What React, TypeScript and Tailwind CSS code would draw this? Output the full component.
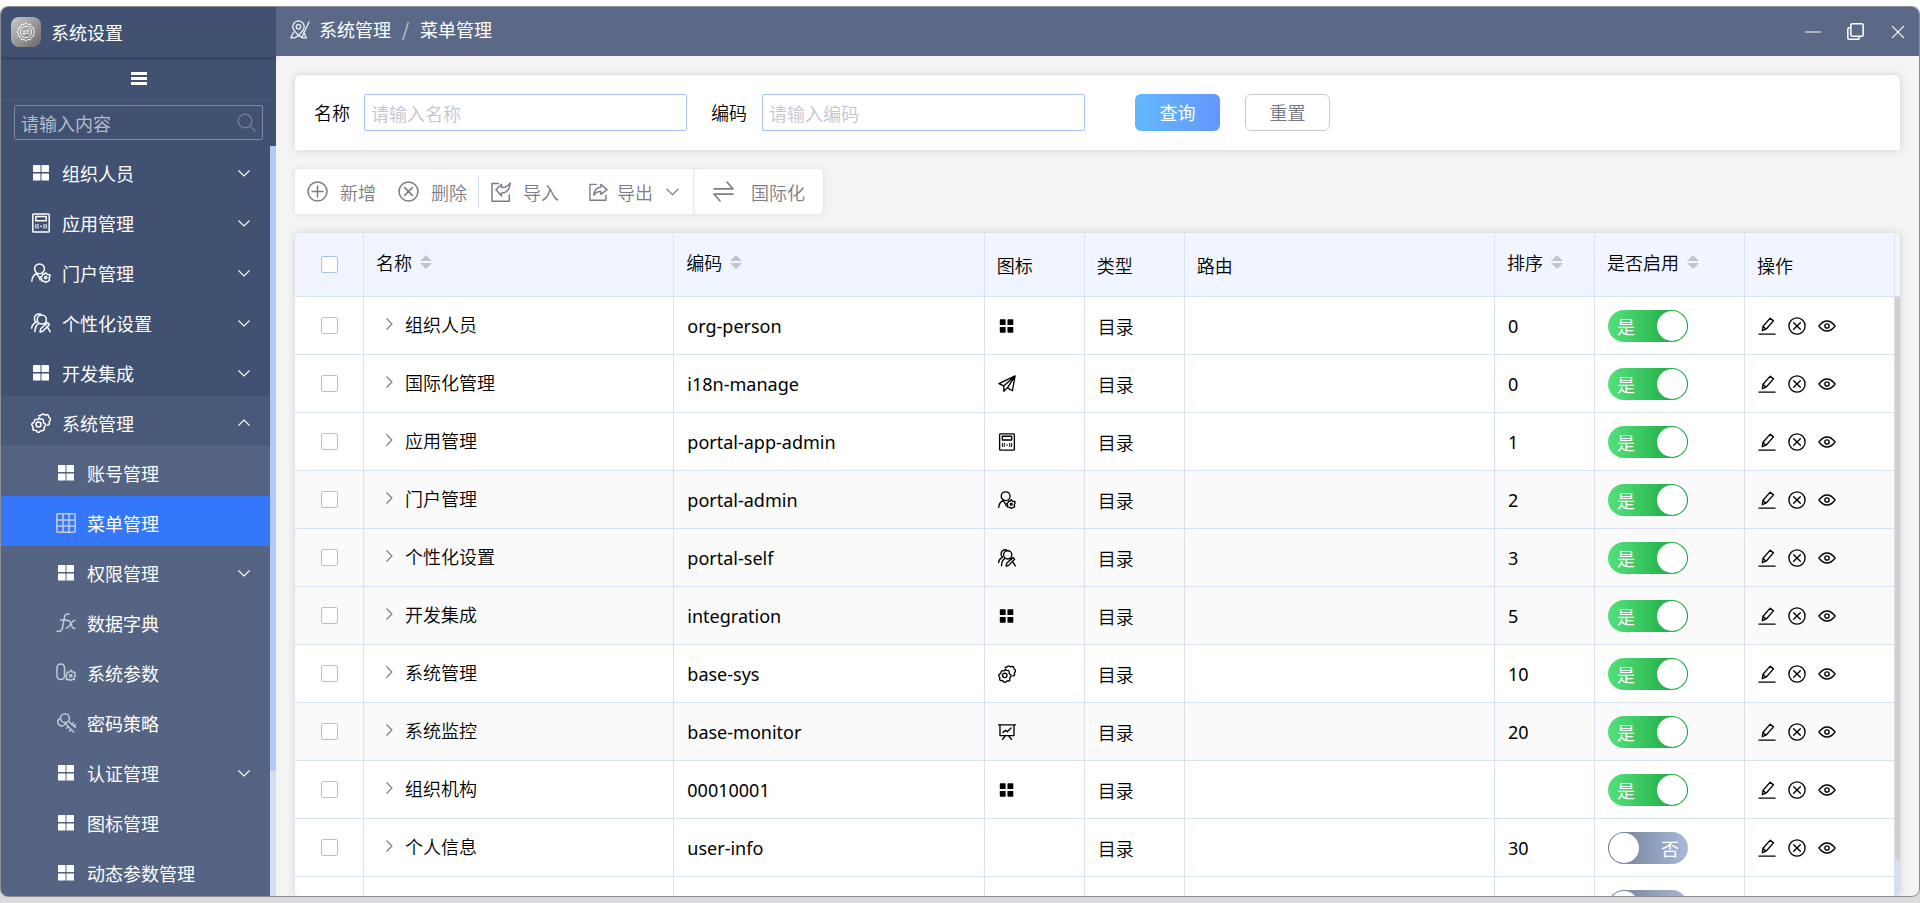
import { useState } from 'react';
import type { ReactNode } from 'react';

type IconProps = { className?: string; thick?: number };

function Svg({ className = 'size-5', thick = 1.5, children }: IconProps & { children: ReactNode }) {
  return (
    <svg
      viewBox="0 0 20 20"
      className={`${className} shrink-0`}
      fill="none"
      stroke="currentColor"
      strokeWidth={thick}
      strokeLinecap="round"
      strokeLinejoin="round"
      aria-hidden="true"
    >
      {children}
    </svg>
  );
}

const GridIcon = ({ className }: IconProps) => (
  <Svg className={className}>
    <g fill="currentColor" stroke="none">
      <rect x="2" y="2" width="7.500" height="7" rx="0.6" />
      <rect x="10.500" y="2" width="7.500" height="7" rx="0.6" />
      <rect x="2" y="10.500" width="7.500" height="7" rx="0.6" />
      <rect x="10.500" y="10.500" width="7.500" height="7" rx="0.6" />
    </g>
  </Svg>
);

const GridSmallIcon = ({ className }: IconProps) => (
  <Svg className={className}>
    <g fill="currentColor" stroke="none">
      <rect x="2" y="2.5" width="6.500" height="6.500" rx="0.8" />
      <rect x="10.500" y="2.5" width="6.500" height="6.500" rx="0.8" />
      <rect x="2" y="11" width="6.500" height="6.500" rx="0.8" />
      <rect x="10.500" y="11" width="6.500" height="6.500" rx="0.8" />
    </g>
  </Svg>
);

const AppIcon = (p: IconProps) => (
  <Svg {...p}>
    <rect x="1.8" y="1" width="16.4" height="18" rx="0.8" />
    <rect x="4.8" y="3.6" width="10.4" height="4.2" />
    <path
      d="M5 11.500q-1 1.700 0 3.600M7 11.500v3.600M13 11.500v3.600M15 11.500q1 1.700 0 3.600"
      strokeWidth="1.100"
    />
    <circle cx="10" cy="13.300" r="0.900" fill="currentColor" stroke="none" />
  </Svg>
);

const UserGearIcon = (p: IconProps) => (
  <Svg {...p}>
    <circle cx="8.500" cy="5.800" r="4.900" />
    <path d="M.8 18.200c.2-3.800 1.700-6.200 4.700-7.600M5.500 10.600l2 2.600c1 1.300 1.500 2.300 1.700 3.600" />
    <path d="M14.800 9.800l1.500 1.700 2.500.2.100 2-.9 1.500.5 2.200-1.800 1-2 .9-1.700-1.100-2.200-.3-.1-2.100-1-1.700 1.500-1.400.7-1.700 1.700.1z" />
    <circle cx="14.700" cy="14.600" r="1.100" />
  </Svg>
);

const UserEditIcon = (p: IconProps) => (
  <Svg {...p}>
    <circle cx="10.800" cy="6.500" r="4.600" />
    <path d="M9.500 1C6 .4 3.300 2.500 3.400 5.600c0 1.700.8 2.800 1.800 3.500-2.600 1.300-4.100 3-4.600 6" />
    <path d="M7.500 10.600c-2.300 1.600-3.500 4-3.600 8M13.500 10.500l1.500 1.300M9 19l.7-3.200 6.800-6.300 2 2-6.700 6.700zM16.700 14.500l2.500 4.300" />
  </Svg>
);

const GearsIcon = (p: IconProps) => (
  <Svg {...p}>
    <path d="M8.100 4.600q1 2 3.200 1.500 1.600.6 1 2.700.3 1.500 2 2.200.8 1.600-.9 2.800-.8 1.200-.1 2.900-1 1.500-2.900.9-1.400.2-2.300 1.800-1.700.3-2.400-1.500-1.100-1-2.900-.5-1.500-1.200-.7-2.900-.1-1.500-1.500-2.500.1-1.800 1.900-2.300 1.200-.9 1.100-2.700 1.400-1.200 2.900-.3 1.100 0 1.600-2.100z" />
    <circle cx="7.500" cy="11.500" r="2.500" />
    <path d="M7.800 2.500q1.600.8 2.700-.9 1.500-1.300 2.900.1 1.300.6 2.600-.2 1.800.4 1.700 2.200.3 1.200 1.700 1.900.5 1.700-.9 2.600-.7 1.100.1 2.600-.7 1.500-2.200 1.300" />
  </Svg>
);

const PlaneIcon = (p: IconProps) => (
  <Svg {...p}>
    <path d="M19 1L1 9.500l5.500 2.500L19 1zM19 1l-3 16.500-5.500-3.200L19 1zM6.500 12v6l3.600-3.700" />
  </Svg>
);

const BoardIcon = (p: IconProps) => (
  <Svg {...p}>
    <path d="M.6 2h18.800M2.200 2v12h15.600V2M8 14.500l-3 3.700M12 14.500l3 3.700M5.500 10.500l2.800-2.300 1.900 1.600 4.300-4.200" />
  </Svg>
);

const TableIcon = (p: IconProps) => (
  <Svg {...p}>
    <rect x="0.800" y="0.800" width="18.400" height="18.400" rx="1" />
    <path d="M1 7h18M1 13h18M7 1v18M13 1v18" />
  </Svg>
);

const FxIcon = (p: IconProps) => (
  <Svg {...p}>
    <path d="M12.800 1.200c-2.500-.8-3.800.5-4.300 3L6.400 15c-.5 2.600-2 4-5.200 3.300M4.500 7h6.300" />
    <path d="M11.500 7.500c1.600-.4 2.300.2 3 2l1.500 4c.6 1.600 1.300 2.200 3 1.800M19 7.200c-1.500 0-2.200.8-3.500 2.600l-2.300 3.300c-.9 1.300-1.600 2-3 2" />
  </Svg>
);

const ParamIcon = (p: IconProps) => (
  <Svg {...p}>
    <rect x="1" y="1" width="7.500" height="15.500" rx="3.700" />
    <path d="M15 7.200l1.400 1.800 2.500.2-.1 2.200.6 1.600-1.300 1.300.2 2.200-2.200.1-1.900.7-1.700-.8-2.200.1.200-2.200-.8-1.700 1.300-1.500.1-2 2.400-.1z" />
    <circle cx="14.700" cy="12.800" r="1.200" />
  </Svg>
);

const KeyIcon = (p: IconProps) => (
  <Svg {...p}>
    <circle cx="9" cy="5.200" r="4.400" />
    <path d="M4.300 5.200a4 4 0 1 0 4.600 6.200M12.300 8.300l7 6M15.800 11.500l1.500-1.700M18 13.400l1.700-1.900M9 10l8.500 9M12.400 13.600l-1.700 1.600M15 16.400l-1.700 1.600" />
  </Svg>
);

const PinIcon = (p: IconProps) => (
  <Svg {...p}>
    <path d="M8.500 15.300C5 12 2.700 9.800 2.700 6.800A5.800 5.800 0 0 1 8.500 1a5.800 5.800 0 0 1 5.800 5.800c0 3-2.300 5.200-5.800 8.500z" />
    <circle cx="8.500" cy="6.800" r="2.200" />
    <path d="M3.500 12.500L.8 17.800h4l3.700-2.500 3.800 2.500h4l-2.500-5.500M12 17L19 2" />
  </Svg>
);

const SearchIcon = (p: IconProps) => (
  <Svg {...p}>
    <circle cx="8.500" cy="8.500" r="7.200" />
    <path d="M13.800 13.800L19 19" />
  </Svg>
);

const PlusCircleIcon = (p: IconProps) => (
  <Svg {...p}>
    <circle cx="10" cy="10" r="9" />
    <path d="M4.800 10h10.400M10 4.800v10.400" />
  </Svg>
);

const CloseCircleIcon = (p: IconProps) => (
  <Svg {...p}>
    <circle cx="10" cy="10" r="9" />
    <path d="M6.300 6.300l7.400 7.400M13.700 6.300l-7.400 7.400" />
  </Svg>
);

const ImportIcon = (p: IconProps) => (
  <Svg {...p}>
    <path d="M7.500 1.500H1v17.700h17.300V13M5 7.500l5.500-5v3c4 .3 6.500-1.200 8.800-4.500-.5 5.800-3.300 9.800-8.800 10v3z" />
  </Svg>
);

const ExportIcon = (p: IconProps) => (
  <Svg {...p}>
    <path d="M7.500 2.500H1v16.700h16.800V14M12.500 2.500L19 8l-6.500 5v-3C9 9.800 7 11 5 14c.3-5 3-8.200 7.500-8.500z" />
  </Svg>
);

const SwapIcon = (p: IconProps) => (
  <Svg {...p}>
    <path d="M1 7.500h18L13.300 1M19 12.500H1L6.700 19" />
  </Svg>
);

const EditIcon = (p: IconProps) => (
  <Svg {...p}>
    <path d="M1 19h18M4.800 15.200l.8-5 8-8.900 3.600 3-8 9zM5.700 10.500l3.200 3" />
  </Svg>
);

const EyeIcon = (p: IconProps) => (
  <Svg {...p}>
    <path d="M1 10c3-3.900 6-5.600 9-5.600s6 1.700 9 5.600c-3 3.900-6 5.600-9 5.600S4 13.900 1 10z" />
    <circle cx="10" cy="10" r="2.400" />
  </Svg>
);

const Chevron = ({ className = 'size-3' }: IconProps) => (
  <svg viewBox="0 0 12 12" className={`${className} shrink-0`} fill="none" stroke="currentColor" aria-hidden="true">
    <path d="M.5 3.500L6 9l5.500-5.500" strokeWidth="1.100" />
  </svg>
);

const LogoIcon = () => (
  <span className="grid size-[30px] shrink-0 place-items-center rounded-lg bg-linear-to-br from-[#cdcdcd] to-[#686868] text-white">
    <Svg className="size-5" thick={0.9}>
      <path d="M10 .8q1.500 2.800 4.300 1.400.3 3.200 3.400 3.600-1.200 2.600 1.500 4.200-2.700 1.700-1.500 4.200-3.100.5-3.400 3.600-2.800-1.300-4.300 1.400-1.500-2.700-4.300-1.400-.3-3.100-3.400-3.600Q3.500 11.700.8 10q2.700-1.600 1.500-4.200 3.100-.4 3.400-3.600Q8.500 3.600 10 .8z" />
      <circle cx="10" cy="10" r="5.700" />
      <path d="M6.800 9h6.400l-1.800-1.700M13.200 11.200H6.800l1.800 1.700" />
    </Svg>
  </span>
);

type Icon = (p: IconProps) => ReactNode;
type MenuItem = { label: string; icon: Icon; arrow?: boolean; muted?: boolean };

const topMenu: MenuItem[] = [
  { label: '组织人员', icon: GridIcon, arrow: true },
  { label: '应用管理', icon: AppIcon, arrow: true },
  { label: '门户管理', icon: UserGearIcon, arrow: true },
  { label: '个性化设置', icon: UserEditIcon, arrow: true },
  { label: '开发集成', icon: GridIcon, arrow: true },
];

const subMenu: MenuItem[] = [
  { label: '账号管理', icon: GridIcon },
  { label: '菜单管理', icon: TableIcon, muted: true },
  { label: '权限管理', icon: GridIcon, arrow: true },
  { label: '数据字典', icon: FxIcon, muted: true },
  { label: '系统参数', icon: ParamIcon, muted: true },
  { label: '密码策略', icon: KeyIcon, muted: true },
  { label: '认证管理', icon: GridIcon, arrow: true },
  { label: '图标管理', icon: GridIcon },
  { label: '动态参数管理', icon: GridIcon },
];

type Row = { name: string; code: string; icon?: Icon; sort: string; enabled: boolean; shaded?: boolean };

const initialRows: Row[] = [
  { name: '组织人员', code: 'org-person', icon: GridSmallIcon, sort: '0', enabled: true },
  { name: '国际化管理', code: 'i18n-manage', icon: PlaneIcon, sort: '0', enabled: true },
  { name: '应用管理', code: 'portal-app-admin', icon: AppIcon, sort: '1', enabled: true },
  { name: '门户管理', code: 'portal-admin', icon: UserGearIcon, sort: '2', enabled: true, shaded: true },
  { name: '个性化设置', code: 'portal-self', icon: UserEditIcon, sort: '3', enabled: true, shaded: true },
  { name: '开发集成', code: 'integration', icon: GridSmallIcon, sort: '5', enabled: true, shaded: true },
  { name: '系统管理', code: 'base-sys', icon: GearsIcon, sort: '10', enabled: true },
  { name: '系统监控', code: 'base-monitor', icon: BoardIcon, sort: '20', enabled: true, shaded: true },
  { name: '组织机构', code: '00010001', icon: GridSmallIcon, sort: '', enabled: true },
  { name: '个人信息', code: 'user-info', sort: '30', enabled: false },
  { name: '', code: '', sort: '', enabled: false },
];

function Sidebar() {
  const [active, setActive] = useState('菜单管理');

  return (
    <aside className="flex w-[275px] shrink-0 flex-col bg-[#405172] text-white">
      <div className="flex h-[50px] shrink-0 items-center gap-[10px] px-[10px] shadow-[0_1px_5px_rgba(0,0,0,0.3)]">
        <LogoIcon />
        <span>系统设置</span>
      </div>
      <button type="button" aria-label="折叠菜单" className="grid h-11 shrink-0 place-items-center border-b border-[#4d5d7d]">
        <span className="flex w-4 flex-col gap-0.5">
          <span className="h-[3px] bg-white" />
          <span className="h-[3px] bg-white" />
          <span className="h-[3px] bg-white" />
        </span>
      </button>
      <div className="shrink-0 px-[13px] pt-1 pb-1.5">
        <label className="flex h-[35px] items-center rounded-xs border border-[#7d89a1] pr-1.5 pl-1.5">
          <input
            type="text"
            aria-label="菜单搜索"
            placeholder="请输入内容"
            className="min-w-0 flex-1 bg-transparent outline-none placeholder:text-[#b5bbc7]"
          />
          <SearchIcon className="size-[19px] text-[#75829c]" thick={1.3} />
        </label>
      </div>

      <div className="flex min-h-0 flex-1">
        <nav className="min-w-0 flex-1 overflow-hidden">
          {topMenu.map(({ label, icon: ItemIcon, arrow }) => (
            <button key={label} type="button" className="flex h-[50px] w-full items-center gap-[11px] pt-1 pr-5 pl-[30px]">
              <ItemIcon className="size-5" />
              <span>{label}</span>
              {arrow && <Chevron className="ml-auto size-3" />}
            </button>
          ))}
          <button
            type="button"
            aria-expanded="true"
            className="flex h-[50px] w-full items-center gap-[11px] bg-[#495979] pt-1 pr-5 pl-[30px]"
          >
            <GearsIcon className="size-5" />
            <span>系统管理</span>
            <Chevron className="ml-auto size-3 rotate-180" />
          </button>
          <div className="bg-[#566484]">
            {subMenu.map(({ label, icon: ItemIcon, arrow, muted }) => (
              <button
                key={label}
                type="button"
                onClick={() => setActive(label)}
                className={`flex h-[50px] w-full items-center gap-[11px] pt-1 pr-5 pl-[55px] ${active === label ? 'bg-[#3577f9]' : ''}`}
              >
                <ItemIcon className={muted ? 'size-5 text-[#c3cad8]' : 'size-5'} />
                <span>{label}</span>
                {arrow && <Chevron className="ml-auto size-3" />}
              </button>
            ))}
          </div>
        </nav>
        <div className="flex w-1.5 flex-col bg-[#d6def2]">
          <div className="h-5/6 rounded-b-sm bg-[#b3c8f7]" />
        </div>
      </div>
    </aside>
  );
}

function TitleBar() {
  return (
    <header className="flex h-[49px] shrink-0 items-center bg-[#5b6987] pr-[13px] pl-3.5 font-normal text-white">
      <PinIcon className="mb-1 size-5 text-[#dfe3ea]" />
      <nav aria-label="当前位置" className="ml-[9px] flex items-center gap-[11px] pb-1.5">
        <a href="#system">系统管理</a>
        <span className="text-[#c8ccd6]">/</span>
        <a href="#menu">菜单管理</a>
      </nav>
      <div className="ml-auto flex items-center gap-[26px]">
        <button type="button" aria-label="最小化">
          <Svg className="size-4"><path d="M0 10h20" /></Svg>
        </button>
        <button type="button" aria-label="还原">
          <Svg className="size-[17px]" thick={1.8}>
            <rect x="4.500" y="1" width="14.500" height="14.500" rx="1.500" />
            <path d="M4 5.500H2.500A1.500 1.500 0 0 0 1 7v10.500A1.500 1.500 0 0 0 2.500 19H13a1.500 1.500 0 0 0 1.500-1.500V16" />
          </Svg>
        </button>
        <button type="button" aria-label="关闭">
          <Svg className="size-4"><path d="M3 3l14 14M17 3L3 17" /></Svg>
        </button>
      </div>
    </header>
  );
}

function SearchForm() {
  return (
    <form
      onSubmit={(e) => e.preventDefault()}
      className="flex h-[75px] shrink-0 items-center rounded-t-md rounded-b-xs bg-white px-[19px] shadow-[0_0_8px_rgba(0,0,0,0.15)]"
    >
      <label htmlFor="name" className="pb-0.5">名称</label>
      <input
        id="name"
        type="text"
        placeholder="请输入名称"
        className="ml-3.5 h-[37px] w-[323px] rounded-xs border border-[#a9c1f0] px-1.5 outline-none placeholder:text-[#c3c6d1]"
      />
      <label htmlFor="code" className="ml-6 pb-0.5">编码</label>
      <input
        id="code"
        type="text"
        placeholder="请输入编码"
        className="ml-[15px] h-[37px] w-[323px] rounded-xs border border-[#a9c1f0] px-1.5 outline-none placeholder:text-[#c3c6d1]"
      />
      <button
        type="submit"
        className="ml-[50px] h-[37px] w-[85px] rounded-md bg-linear-to-r from-[#63b8fd] to-[#6497fb] pb-0.5 font-normal text-white"
      >
        查询
      </button>
      <button type="reset" className="ml-[25px] h-[37px] w-[85px] rounded-md border border-[#c9c9cf] pb-0.5 text-[#77777f]">
        重置
      </button>
    </form>
  );
}

function Toolbar() {
  return (
    <div className="flex h-[45px] shrink-0 self-start rounded-sm text-[#7d7d86] shadow-[0_0_6px_rgba(0,0,0,0.1)]">
      <div className="flex items-center rounded-l-sm bg-white">
        <button type="button" className="flex items-center gap-3 pl-3">
          <PlusCircleIcon className="size-[21px]" />
          新增
        </button>
        <button type="button" className="ml-[22px] flex items-center gap-3 pr-[11px]">
          <CloseCircleIcon className="size-[21px]" />
          删除
        </button>
        <button type="button" className="flex h-8 items-center gap-3 border-l border-[#d7e1f3] pl-3">
          <ImportIcon className="size-5" />
          导入
        </button>
        <button type="button" className="ml-[30px] flex items-center gap-[9px] pr-3.5">
          <ExportIcon className="size-[19px]" />
          导出
          <Chevron className="ml-1 size-[13px]" />
        </button>
      </div>
      <button type="button" className="flex items-center gap-[17px] rounded-md border-l border-[#e3e6ee] bg-white pr-[18px] pl-[19px]">
        <SwapIcon className="size-[21px]" />
        国际化
      </button>
    </div>
  );
}

function SortArrows() {
  return (
    <svg viewBox="0 0 12 14" className="h-3.5 w-3 fill-[#c0c4cf]" aria-hidden="true">
      <path d="M6 0l6 6H0zM0 8h12l-6 6z" />
    </svg>
  );
}

function Head({ children }: { children: ReactNode }) {
  return <th className="border-r border-b border-[#d8e2f0] px-3 text-left font-[350]">{children}</th>;
}

function SortHead({ children }: { children: ReactNode }) {
  return (
    <Head>
      <button type="button" className="flex items-center gap-2 pb-1.5">
        {children}
        <SortArrows />
      </button>
    </Head>
  );
}

type ToggleProps = { checked: boolean; onChange: () => void; name: string };

function Toggle({ checked, onChange, name }: ToggleProps) {
  return (
    <label
      className={`flex h-8 w-20 items-center rounded-full p-px font-normal text-white ${
        checked
          ? 'justify-end bg-linear-to-r from-[#54e17c] to-[#05a137]'
          : 'justify-start bg-linear-to-r from-[#6f7d93] to-[#a9b8d9]'
      }`}
    >
      <input type="checkbox" role="switch" className="sr-only" checked={checked} onChange={onChange} aria-label={`${name}是否启用`} />
      {checked && <span className="flex-1 pl-2">是</span>}
      <span className="size-[30px] rounded-full bg-white" />
      {!checked && name && <span className="flex-1 pr-2 text-right">否</span>}
    </label>
  );
}

const checkboxClass =
  'mx-auto block size-[17px] appearance-none rounded-xs border border-[#a9c1f0] bg-white checked:bg-[#3577f9]';

function MenuTable() {
  const [rows, setRows] = useState(initialRows);

  const toggle = (index: number) =>
    setRows((prev) => prev.map((row, i) => (i === index ? { ...row, enabled: !row.enabled } : row)));

  const cell = 'border-r border-b border-[#d8e2f0] px-[13px]';
  const latin = "font-['Noto_Sans','Noto_Sans_CJK_SC',sans-serif] font-normal";

  return (
    <div className="flex min-h-0 flex-1 overflow-hidden rounded-sm bg-white shadow-[0_0_8px_rgba(0,0,0,0.15)]">
      <table className="w-full table-fixed border-separate border-spacing-0 self-start">
        <colgroup>
          <col className="w-[69px]" />
          <col />
          <col />
          <col className="w-[100px]" />
          <col className="w-[100px]" />
          <col />
          <col className="w-[100px]" />
          <col className="w-[150px]" />
          <col className="w-[150px]" />
        </colgroup>
        <thead>
          <tr className="h-16 bg-[#f0f5ff]">
            <Head>
              <input type="checkbox" aria-label="全选" className={checkboxClass} />
            </Head>
            <SortHead>名称</SortHead>
            <SortHead>编码</SortHead>
            <Head>图标</Head>
            <Head>类型</Head>
            <Head>路由</Head>
            <SortHead>排序</SortHead>
            <SortHead>是否启用</SortHead>
            <Head>操作</Head>
          </tr>
        </thead>
        <tbody>
          {rows.map((row, index) => {
            const RowIcon = row.icon;
            return (
              <tr key={index} className={row.shaded ? 'h-[58px] bg-[#fafafa]' : 'h-[58px]'}>
                <td className={cell}>
                  <input type="checkbox" aria-label={`选择${row.name}`} className={checkboxClass} />
                </td>
                <td className={cell}>
                  <div className="flex items-center gap-2.5 pb-1 pl-1.5">
                    <button type="button" aria-label="展开" className="text-[#77777f]">
                      <Chevron className="size-3 -rotate-90" />
                    </button>
                    {row.name}
                  </div>
                </td>
                <td className={`${cell} ${latin}`}>{row.code}</td>
                <td className={cell}>{RowIcon && <RowIcon className="size-[18px]" thick={1.5} />}</td>
                <td className={cell}>{row.name && '目录'}</td>
                <td className={cell} />
                <td className={`${cell} ${latin}`}>{row.sort}</td>
                <td className={cell}>
                  <Toggle checked={row.enabled} onChange={() => toggle(index)} name={row.name} />
                </td>
                <td className={cell}>
                  <div className="flex gap-3">
                    <button type="button" aria-label="编辑"><EditIcon className="size-[18px]" thick={1.5} /></button>
                    <button type="button" aria-label="删除"><CloseCircleIcon className="size-[18px]" thick={1.5} /></button>
                    <button type="button" aria-label="查看"><EyeIcon className="size-[18px]" thick={1.5} /></button>
                  </div>
                </td>
              </tr>
            );
          })}
        </tbody>
      </table>
      <div className="flex w-[5px] shrink-0 flex-col bg-[#d6def2]">
        <div className="h-16 shrink-0 border-b border-[#d8e2f0] bg-[#f0f5ff]" />
        <div className="min-h-0 flex-1">
          <div className="h-[94%] bg-[#d0d0d0]" />
        </div>
      </div>
    </div>
  );
}

export default function App() {
  return (
    <div className="flex h-screen flex-col bg-linear-to-b from-white from-50% to-[#dadada] to-50% pt-1.5 pb-1.5 font-['Noto_Sans_CJK_SC',sans-serif] text-lg leading-6 text-black">
      <div className="flex min-h-0 flex-1 overflow-hidden rounded-lg border border-[#8b8e94] bg-[#f4f4f4]">
        <Sidebar />
        <main className="flex min-w-0 flex-1 flex-col font-[350]">
          <TitleBar />
          <div className="flex min-h-0 flex-1 flex-col gap-[19px] px-[19px] pt-[19px]">
            <SearchForm />
            <Toolbar />
            <MenuTable />
          </div>
        </main>
      </div>
    </div>
  );
}
